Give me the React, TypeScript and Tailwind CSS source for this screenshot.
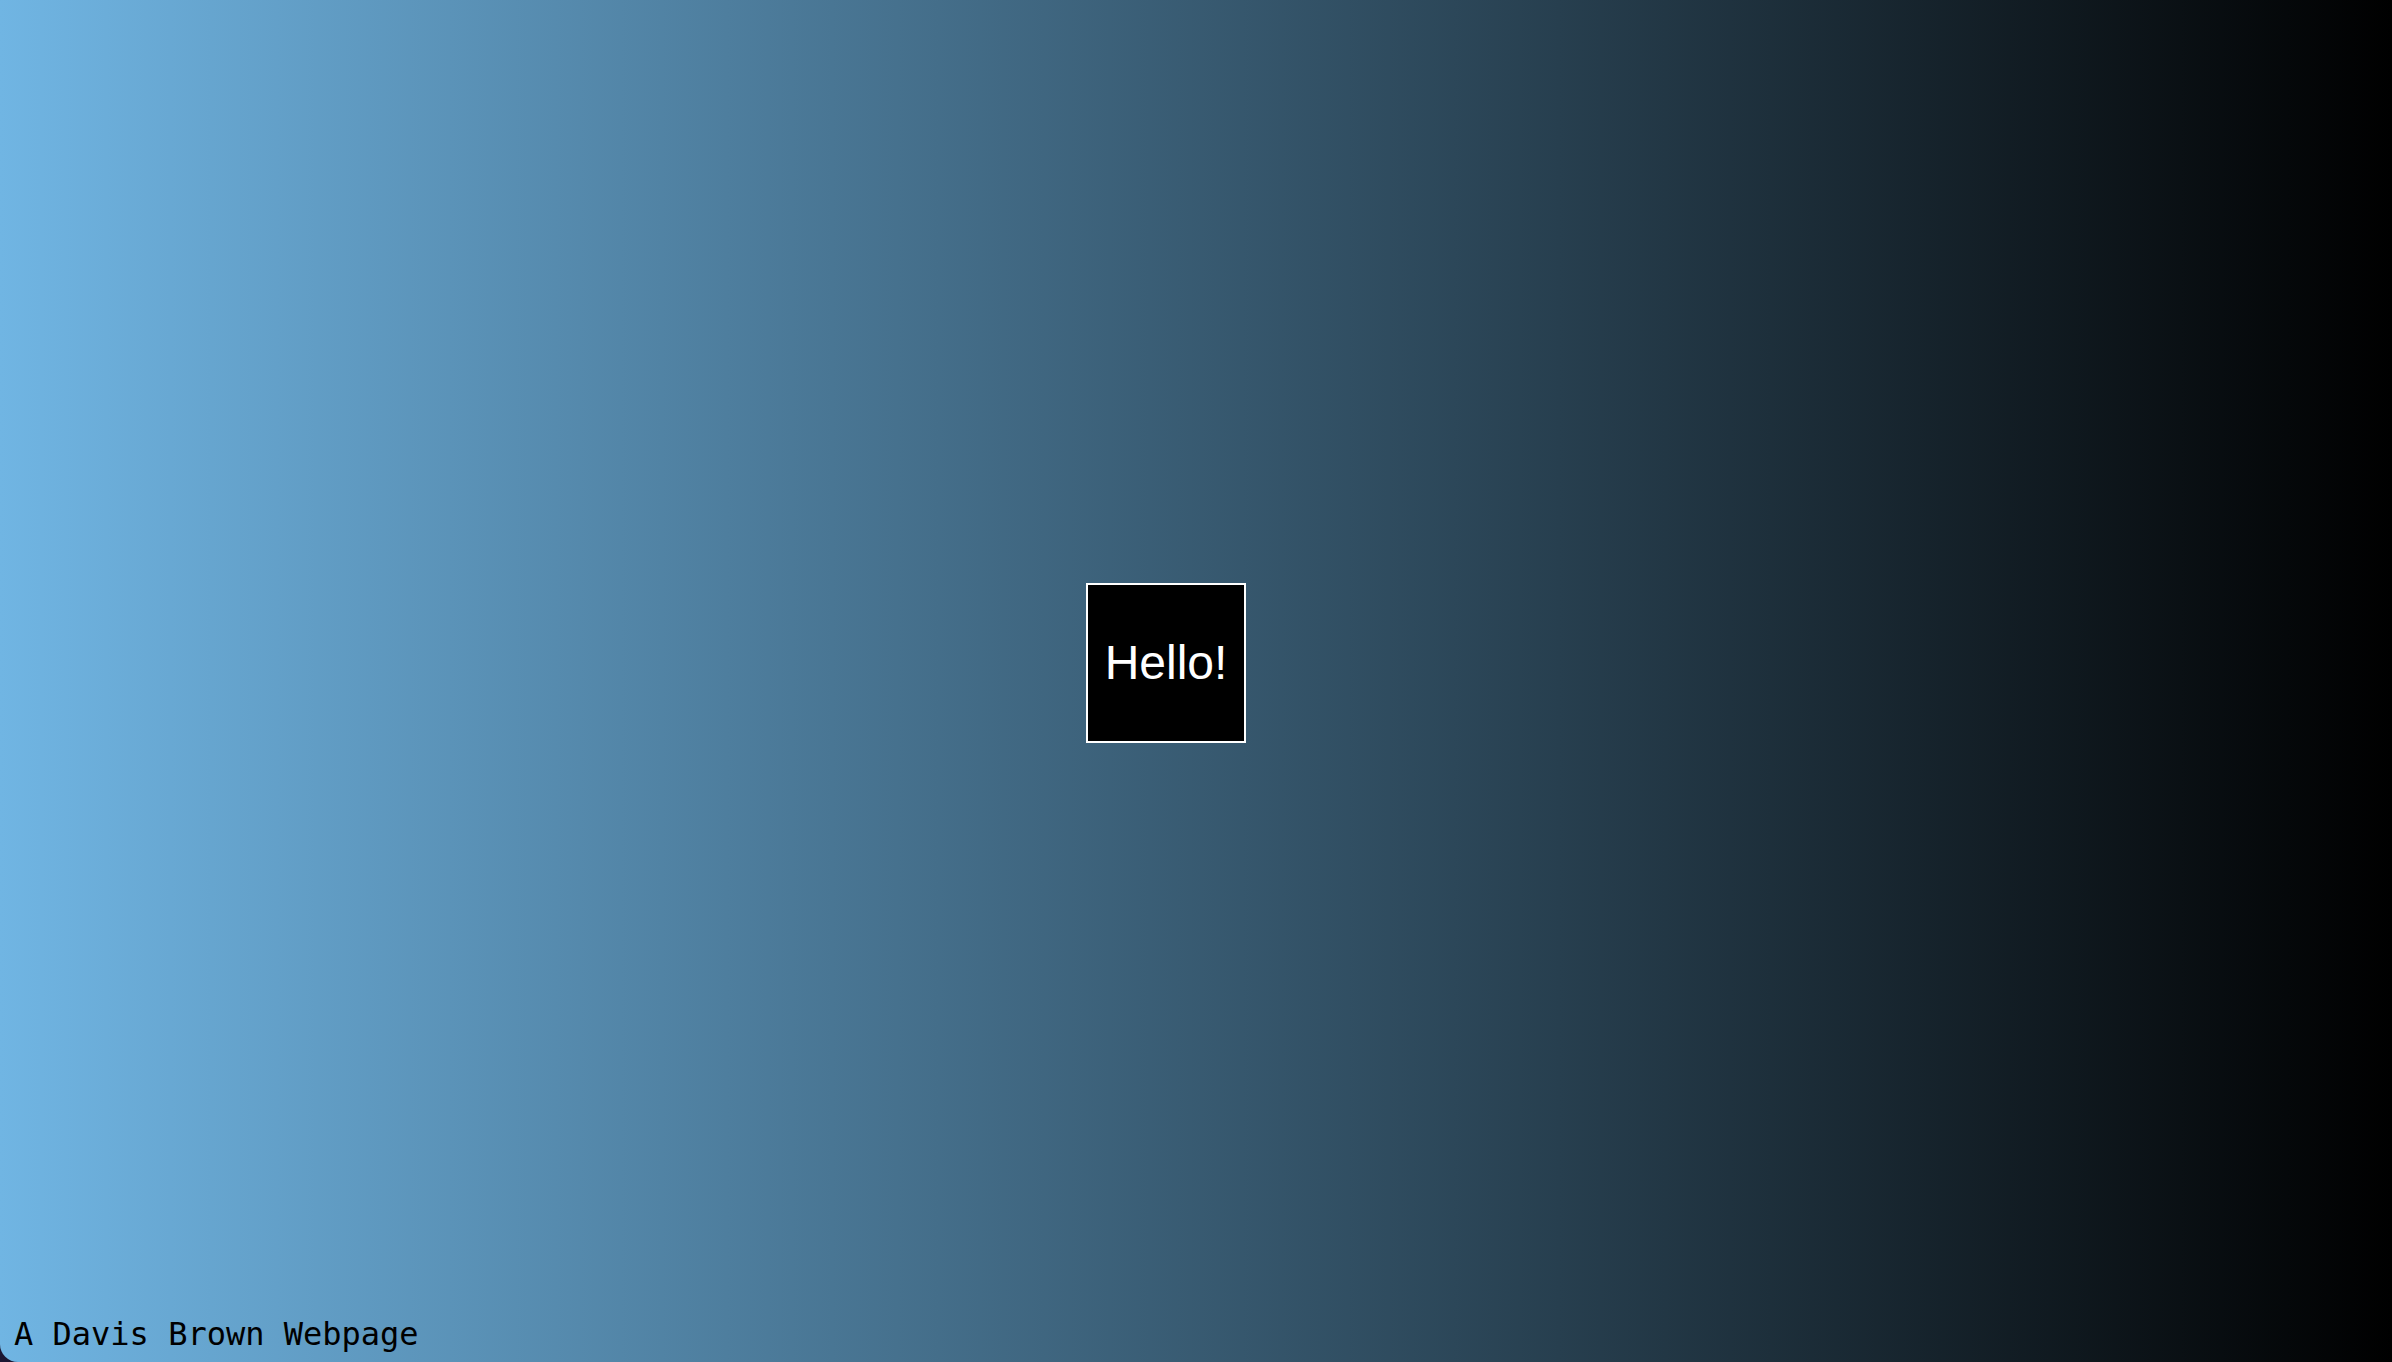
export default function App() {
  return (
    <div className="h-screen w-full bg-[#1b1733]">
      <div className="flex h-full w-full flex-col rounded-bl-[18px] bg-[linear-gradient(to_right,#70b5e3,#000000)]">
        <main className="flex flex-1 items-center justify-center pr-[60px] pt-[10px]">
          <div className="flex h-[160px] w-[160px] items-center justify-center border-2 border-white bg-black">
            <span className="text-[48px] leading-none text-white [font-family:'Liberation_Sans',Arial,sans-serif]">
              Hello!
            </span>
          </div>
        </main>
        <footer className="h-[47px] pl-[14px] text-[32px] leading-[38px] text-black [font-family:'DejaVu_Sans_Mono',monospace]">
          A Davis Brown Webpage
        </footer>
      </div>
    </div>
  );
}
